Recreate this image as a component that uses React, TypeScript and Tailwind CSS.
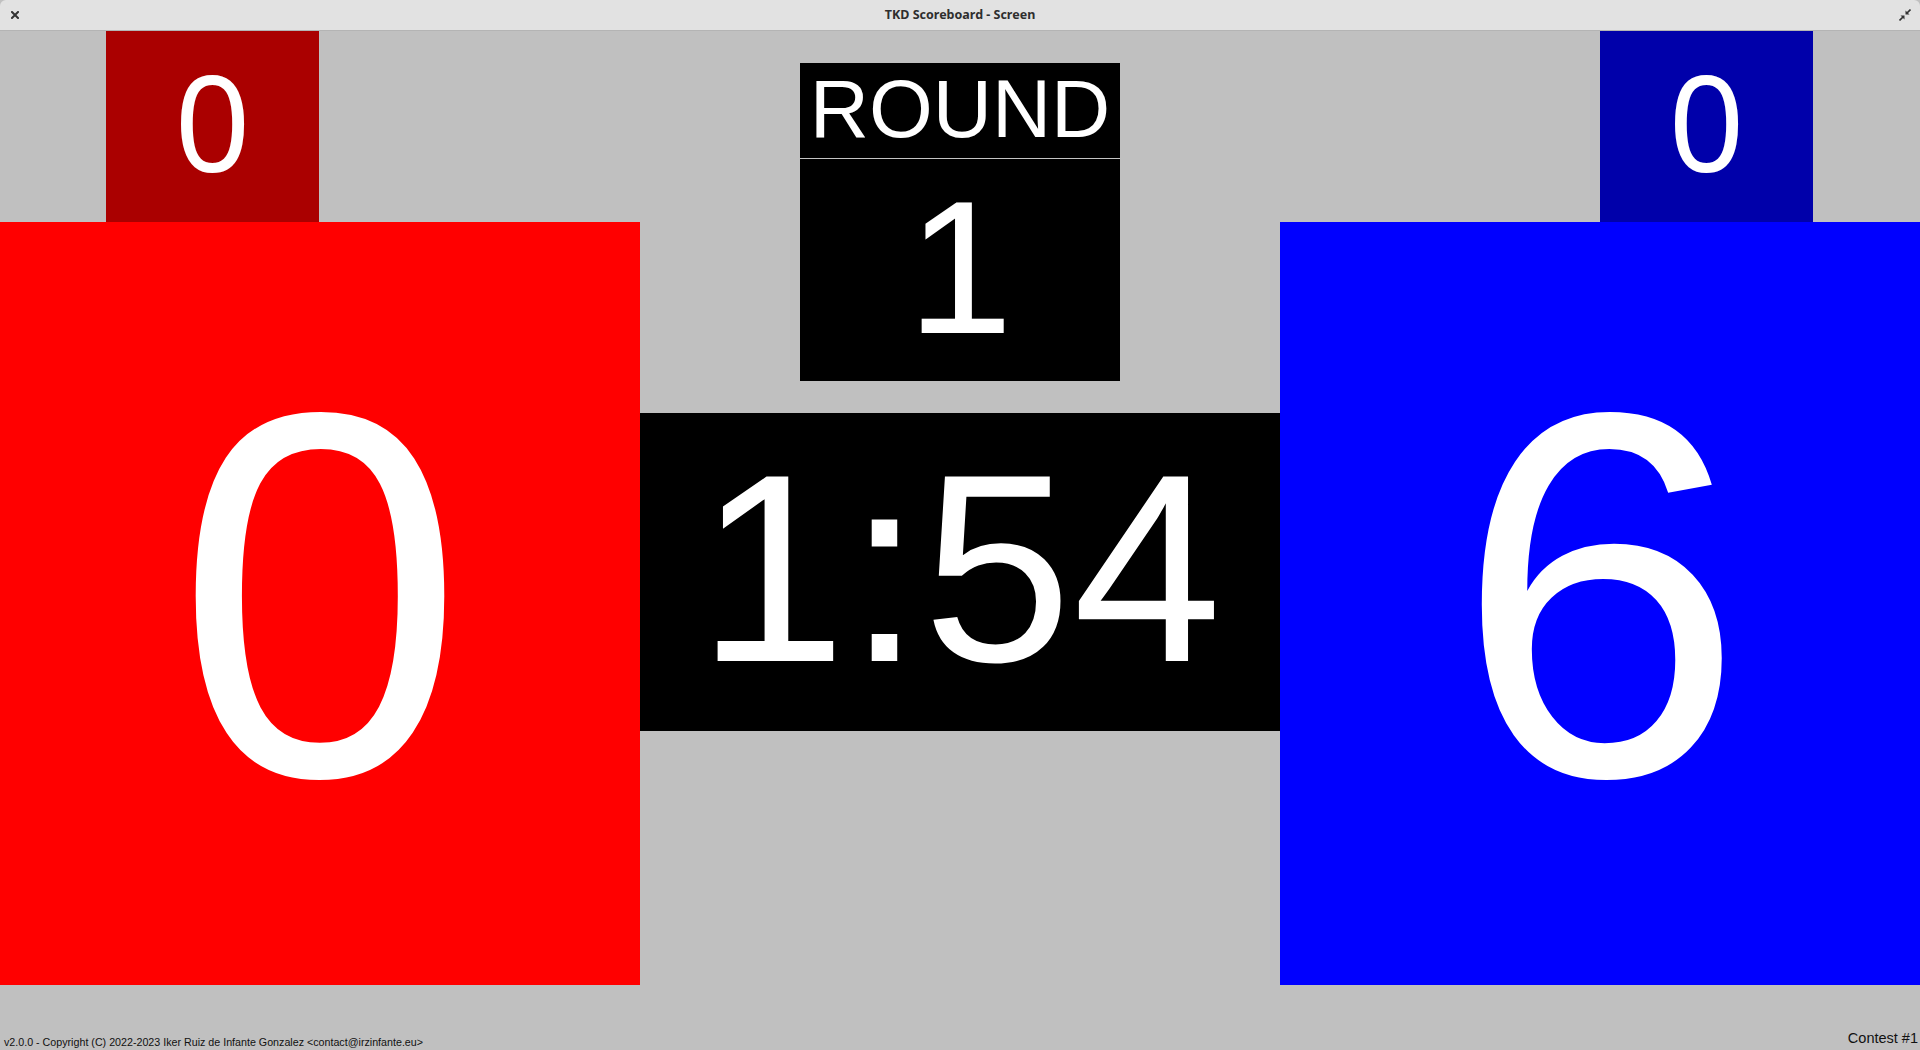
export default function App() {
  const arial = "font-['Liberation_Sans',Arial,sans-serif]";

  return (
    <div className="flex h-[1050px] w-[1920px] flex-col overflow-hidden bg-[#c0c0c0]">
      {/* window title bar */}
      <div className="relative flex h-[31px] shrink-0 items-center justify-center rounded-t-[6px] border-b border-[#b4b4b4] bg-[#e2e2e2]">
        <svg className="absolute left-[11px] top-[11px]" width="8" height="8" viewBox="0 0 8 8">
          <path d="M1 1L7 7M7 1L1 7" stroke="#333" strokeWidth="2" strokeLinecap="square" />
        </svg>
        <span className="font-['Noto_Sans',sans-serif] text-[12.5px] leading-none font-bold text-[#2e2e2e]">TKD Scoreboard - Screen</span>
        <svg className="absolute right-[9px] top-[9px]" width="12" height="12" viewBox="0 0 12 12">
          <path d="M11.5 0.5L7.5 4.5M0.5 11.5L4.5 7.5" stroke="#333" strokeWidth="1.6" />
          <path d="M6.5 5.5L6.5 1.5L10.5 5.5Z M5.5 6.5L5.5 10.5L1.5 6.5Z" fill="#333" />
        </svg>
      </div>

      <div className="flex h-[954px] shrink-0">
        {/* red side */}
        <div className="flex w-[640px] flex-col">
          <div className="ml-[106px] flex h-[191px] w-[213px] shrink-0 items-center justify-center bg-[#aa0000] pb-[12px]">
            <span className="font-['Noto_Sans',sans-serif] text-[133px] leading-none text-white">0</span>
          </div>
          <div className="flex h-[763px] items-center justify-center bg-[#ff0000] pb-[17px]">
            <span className={`${arial} text-[520px] leading-none text-white`}>0</span>
          </div>
        </div>

        {/* center */}
        <div className="flex w-[640px] flex-col items-center pt-[32px]">
          <div className="flex w-[320px] flex-col">
            <div className="flex h-[95px] items-center justify-center bg-black pb-[3px]">
              <span className={`${arial} text-[82px] leading-none text-white`}>ROUND</span>
            </div>
            <div className="h-px bg-[#c4c4c4]" />
            <div className="flex h-[222px] items-center justify-center bg-black pb-[7px]">
              <span className={`${arial} text-[190px] leading-none text-white`}>1</span>
            </div>
          </div>
          <div className="mt-[32px] flex h-[318px] w-full items-center justify-center bg-black pb-[9px]">
            <span className={`${arial} text-[268px] leading-none tracking-[1px] text-white`}>1:54</span>
          </div>
        </div>

        {/* blue side */}
        <div className="flex w-[640px] flex-col">
          <div className="ml-[320px] flex h-[191px] w-[213px] shrink-0 items-center justify-center bg-[#0000aa] pb-[12px]">
            <span className="font-['Noto_Sans',sans-serif] text-[133px] leading-none text-white">0</span>
          </div>
          <div className="flex h-[763px] items-center justify-center bg-[#0000ff] pb-[17px]">
            <span className={`${arial} text-[520px] leading-none text-white`}>6</span>
          </div>
        </div>
      </div>

      {/* footer */}
      <div className={`flex flex-1 items-end justify-between pl-1 pr-[2px] ${arial} leading-normal text-[#111]`}>
        <span className="text-[10.7px]">v2.0.0 - Copyright (C) 2022-2023 Iker Ruiz de Infante Gonzalez &lt;contact@irzinfante.eu&gt;</span>
        <span className="text-[14.5px]">Contest #1</span>
      </div>
    </div>
  );
}
